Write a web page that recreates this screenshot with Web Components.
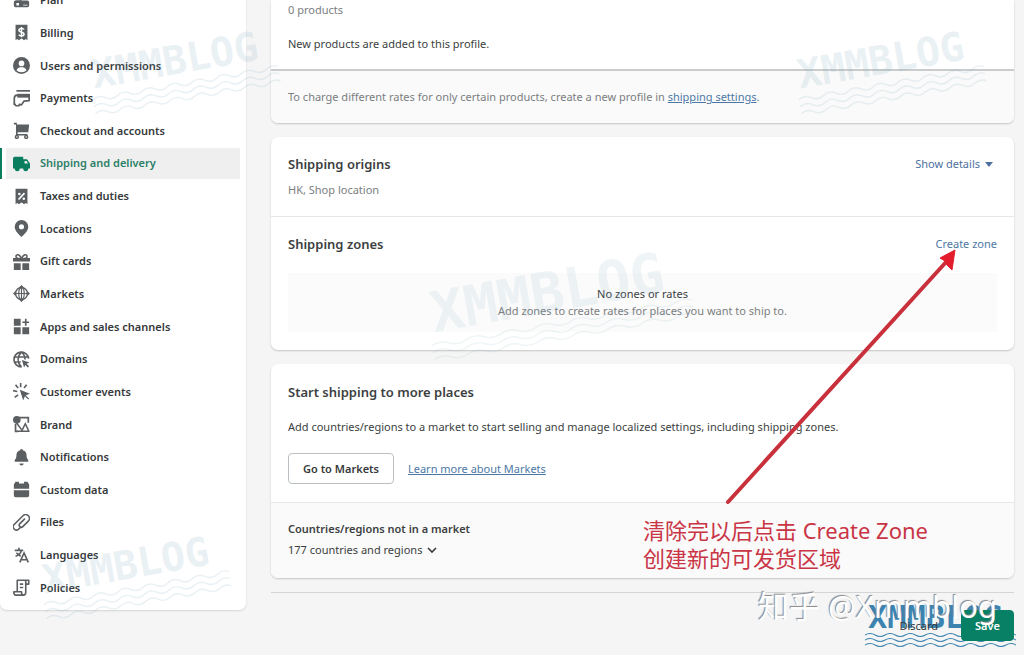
<!DOCTYPE html>
<html lang="en">
<head>
<meta charset="utf-8">
<title>Shipping and delivery</title>
<style>
  body { margin: 0; background: #f5f5f5; color: #3c3f41; font: 11px/16px "Noto Sans", "Open Sans", "Noto Sans CJK SC", sans-serif; }
</style>
</head>
<body>
<settings-page></settings-page>

<script>
const icons = {
  plan: '<path d="M3 10h5v5H3zM9 3h8v5H9z"/><path d="M1 12a2 2 0 0 1 2-2h5V6h2v4h7a2 2 0 0 1 2 2v4a2 2 0 0 1-2 2H3a2 2 0 0 1-2-2z"/><path d="M4 13h3v3H4zM12 15h5v1h-5z" fill="#fff"/>',
  billing: '<path d="M3 1h14v18l-2-1.500-2 1.500-2-1.500-1-.5-1 .5L7 19l-2-1.500L3 19z"/><path d="M13 6.500C12.500 5.500 11.500 5.200 10 5.200c-1.800 0-3 .8-3 2.200 0 3 6 1.500 6 4.300 0 1.500-1.300 2.300-3 2.300-1.600 0-2.700-.6-3.200-1.600M10 3.500v12" fill="none" stroke="#fff" stroke-width="1.800"/>',
  user: '<circle cx="10" cy="10" r="10"/><circle cx="10" cy="7.500" r="3.300" fill="#fff"/><path d="M4 15.500C5.500 12.800 7.500 12.200 10 12.200s4.500.6 6 3.300A8 8 0 0 1 10 18a8 8 0 0 1-6-2.500z" fill="#fff"/>',
  payments: '<path d="M4 0h16v2H4z"/><path d="M1.500 18V10Q1.500 6 5 6H19v6.500L13 13l-3 4.500-2.500-.5L7 18.500H3.500L1 15" fill="none" stroke="currentColor" stroke-width="2" stroke-linejoin="round"/><path d="M5 4.500h15V9H5z"/>',
  cart: '<path d="M1 1h3.500v2H19l-1 9H5.500v2H17v2H3.500V3H1z"/><circle cx="4.500" cy="17.500" r="1.700" fill="none" stroke="currentColor" stroke-width="1.700"/><circle cx="15.500" cy="17.500" r="1.700" fill="none" stroke="currentColor" stroke-width="1.700"/>',
  truck: '<path d="M1.500 2H12v3h4.500l3.500 5v6h-2a3 3 0 0 1-6 0H8a3 3 0 0 1-6 0H0V3.500z"/><path d="M13.500 7H16l1.800 3h-4.300z" fill="#edeeee"/><circle cx="5" cy="16" r="1.500"/><circle cx="15" cy="16" r="1.500"/>',
  tax: '<path d="M3 1h14v18l-2-1.500-2 1.500-2-1.500-1-.5-1 .5L7 19l-2-1.500L3 19z"/><path d="M6.500 13.500 13.500 6" stroke="#fff" stroke-width="2"/><circle cx="7.500" cy="7" r="1.500" fill="#fff"/><circle cx="12.700" cy="12.700" r="1.500" fill="#fff"/>',
  pin: '<path fill-rule="evenodd" d="M10 0a8 8 0 0 0-8 8c0 5 5 9 8 12 3-3 8-7 8-12a8 8 0 0 0-8-8zm0 5a3 3 0 1 1 0 6 3 3 0 0 1 0-6z"/>',
  gift: '<path d="M1 12h8v8H1zM11 12h8v8h-8zM0 6h20v4H0z"/><path d="M10 7C8 1 3.500 1 3.500 4S8 6.500 10 7zM10 7c2-6 6.500-6 6.500-3S12 6.500 10 7z" fill="none" stroke="currentColor" stroke-width="1.800"/>',
  market: '<circle cx="10" cy="10" r="7" fill="none" stroke="currentColor" stroke-width="1.700"/><ellipse cx="10" cy="10" rx="3.200" ry="7" fill="none" stroke="currentColor" stroke-width="1.400"/><path d="M3 10h14M10 3v14" stroke="currentColor" stroke-width="1.400"/><path d="m10 0 3 3H7zM10 20l3-3H7zM0 10l3-3v6zM20 10l-3-3v6z"/>',
  apps: '<path d="M1 1h8v8H1zM1 11h8v8H1zM11 11h8v8h-8zM14 1h2v3h3v2h-3v3h-2V6h-3V4h3z"/>',
  domain: '<path d="M18.500 9A8.700 8.700 0 1 0 10 18.700M10 19C4.500 13 4.500 7 10 1M10 1c3 3 4.500 6 4 9M2 7h16M2 13h7" fill="none" stroke="currentColor" stroke-width="1.900"/><path d="m10.500 10.500 9 3-3.500 1.500 3 3-1.500 1.500-3-3-1.500 3z"/>',
  cursor: '<path d="m8 8 12 4.500-5 2 4 4-1 1-4-4-2 5z"/><path d="M9 0v5M3 2l3 4M16 2l-3 4M0 9l5 1M2 17l4-3" stroke="currentColor" stroke-width="1.900"/>',
  brand: '<circle cx="4.500" cy="4.500" r="4.500"/><path d="M7 2h11v6M3 9v9h3" fill="none" stroke="currentColor" stroke-width="2"/><path d="M5 18h14M10 18l4.500-9L19 18.500M4 8l6 8" fill="none" stroke="currentColor" stroke-width="1.800"/>',
  bell: '<path d="M10 0a1.500 1.500 0 0 1 1.500 1.600C15 2.500 16 5 16 8c0 3 1 4 2 5v2H2v-2c1-1 2-2 2-5 0-3 1-5.500 4.500-6.400A1.500 1.500 0 0 1 10 0zM7.500 17h5a2.500 2.500 0 0 1-5 0z"/>',
  data: '<path d="M3 1h4v2h6V1h4l2 3v5H1V4zM1 11h18v6a2 2 0 0 1-2 2H3a2 2 0 0 1-2-2z"/>',
  clip: '<path d="M9 15.500 6.800 17.700a3.800 3.800 0 0 1-5.400-5.400L11.700 2a4.400 4.400 0 0 1 6.300 6.300l-6.500 6.500a2.400 2.400 0 0 1-3.400-3.400L13.500 6" fill="none" stroke="currentColor" stroke-width="1.900" stroke-linecap="round"/>',
  language: '<path d="M2 4h10M7 1v3M10 4c-1 4-4 6-7 7M4 7l5 4M8 18l5-11 5 11M10 15h6.500" fill="none" stroke="currentColor" stroke-width="1.900"/>',
  policy: '<path d="M5 14V1.500h13.500V6H15v10c0 2-1 3-3 3H3c-2 0-2-3-2-4h9c0 2 0 4 2 4M15 6V2M8 6h4M8 10h4" fill="none" stroke="currentColor" stroke-width="1.900" stroke-linejoin="round"/>'
};

function define(name, html) {
  const template = document.createElement('template');
  template.innerHTML = html;
  customElements.define(name, class extends HTMLElement {
    constructor() {
      super();
      this.attachShadow({ mode: 'open' }).append(template.content.cloneNode(true));
    }
  });
}

customElements.define('nav-item', class extends HTMLElement {
  connectedCallback() {
    const root = this.attachShadow({ mode: 'open' });
    root.innerHTML = `<style>
      :host { display: grid; color: #36393b; }
      a { display: flex; align-items: center; gap: 10px; margin: 0 6px; padding-left: 7px; color: inherit; text-decoration: none; font-weight: 600; }
      svg { width: 17px; height: 17px; fill: #5c5f62; color: #5c5f62; flex: none; }
      :host([active]) { border-left: 2px solid #0a7d5f; }
      :host([active]) a { margin-left: 4px; background: #efefef; color: #2b7f68; }
      :host([active]) svg { fill: #0a7d5f; color: #0a7d5f; }
    </style><a href="#"><svg viewBox="0 0 20 20" aria-hidden="true">${icons[this.getAttribute('icon')]}</svg><slot></slot></a>`;
    if (this.hasAttribute('active')) root.querySelector('a').setAttribute('aria-current', 'page');
  }
});

define('settings-nav', `<style>
    :host { display: block; }
    nav { display: grid; grid-auto-rows: 1fr; gap: 2px; min-height: 618px; margin-top: -15px; padding-bottom: 7px; background: #fff; border-radius: 0 0 7px 7px; box-shadow: 0 1px 2px #0002; }
  </style>
  <nav aria-label="Settings">
    <nav-item icon="plan">Plan</nav-item>
    <nav-item icon="billing">Billing</nav-item>
    <nav-item icon="user">Users and permissions</nav-item>
    <nav-item icon="payments">Payments</nav-item>
    <nav-item icon="cart">Checkout and accounts</nav-item>
    <nav-item icon="truck" active>Shipping and delivery</nav-item>
    <nav-item icon="tax">Taxes and duties</nav-item>
    <nav-item icon="pin">Locations</nav-item>
    <nav-item icon="gift">Gift cards</nav-item>
    <nav-item icon="market">Markets</nav-item>
    <nav-item icon="apps">Apps and sales channels</nav-item>
    <nav-item icon="domain">Domains</nav-item>
    <nav-item icon="cursor">Customer events</nav-item>
    <nav-item icon="brand">Brand</nav-item>
    <nav-item icon="bell">Notifications</nav-item>
    <nav-item icon="data">Custom data</nav-item>
    <nav-item icon="clip">Files</nav-item>
    <nav-item icon="language">Languages</nav-item>
    <nav-item icon="policy">Policies</nav-item>
  </nav>`);

define('ui-card', `<style>
    :host { display: block; background: #fff; border-radius: 7px; box-shadow: 0 1px 2px #0003; overflow: hidden; }
  </style><slot></slot>`);

define('card-section', `<style>
    :host { display: block; padding: 18px 17px; }
    :host([divided]) { border-top: 1px solid #e6e7e8; }
    :host([subdued]) { background: #fafafa; }
  </style><slot></slot>`);

define('ui-link', `<style>
    :host { display: inline; }
    a { color: #4d78a5; text-decoration: none; }
    :host([underline]) a { text-decoration: underline; }
  </style><a href="#"><slot></slot></a>`);

define('ui-button', `<style>
    :host { display: inline-flex; }
    button { font: inherit; font-weight: 600; color: #36393b; min-height: 31px; padding: 0 14px; border: 1px solid #babfc3; border-radius: 4px; background: #fff; }
    :host([primary]) button { background: #078065; border-color: #078065; color: #fff; padding: 0 13px; }
    :host([plain]) button { background: none; border-color: transparent; font-weight: 400; }
  </style><button type="button"><slot></slot></button>`);

define('wave-mark', `<style>
    :host { display: block; width: max-content; font: 700 40px/44px "DejaVu Sans Mono", monospace; color: #7aa5b8; opacity: .15; transform: rotate(-10deg); }
    :host([large]) { font-size: 56px; line-height: 58px; opacity: .11; }
    :host([solid]) { font-size: 32px; line-height: 32px; color: #2878a8; opacity: .9; transform: none; }
    svg { display: block; width: 0; min-width: 112%; height: 20px; margin-left: -2%; }
    :host([solid]) svg { height: 14px; }
  </style>
  <slot></slot>
  <svg viewBox="0 0 150 14" preserveAspectRatio="none" fill="none" stroke="currentColor" aria-hidden="true">
    <path id="w" d="M0 2q5-3 10 0t10 0 10 0 10 0 10 0 10 0 10 0 10 0 10 0 10 0 10 0 10 0 10 0 10 0 10 0"/>
    <use href="#w" y="5"/><use href="#w" y="10"/>
  </svg>`);

define('watermark-layer', `<style>
    :host { position: absolute; inset: 0; pointer-events: none; overflow: hidden; z-index: 1; }
    wave-mark { position: absolute; }
    .a { left: 92px; top: 38px; } .b { left: 798px; top: 38px; }
    .c { left: 431px; top: 264px; } .d { left: 43px; top: 543px; }
    .e { left: 868px; top: 601px; }
  </style>
  <wave-mark class="a">XMMBLOG</wave-mark>
  <wave-mark class="b">XMMBLOG</wave-mark>
  <wave-mark class="c" large>XMMBLOG</wave-mark>
  <wave-mark class="d">XMMBLOG</wave-mark>
  <wave-mark class="e" solid>XMMBLOG</wave-mark>`);

define('annotation-layer', `<style>
    :host { position: absolute; inset: 0; pointer-events: none; overflow: hidden; z-index: 3; }
    svg, p { position: absolute; margin: 0; }
    svg { left: 720px; top: 245px; }
    .note { left: 643px; top: 516px; color: #c93545; font: 22px/28px "Noto Sans", "Noto Sans CJK SC", sans-serif; }
    .credit { left: 758px; top: 588px; color: #fff; font: 31px/36px "Noto Sans", "Noto Sans CJK SC", sans-serif; text-shadow: -1px -1px 1px #888; }
  </style>
  <svg width="245" height="265" viewBox="0 0 245 265" aria-hidden="true">
    <path d="M8 257 227 16" stroke="#c8303b" stroke-width="4" stroke-linecap="round"/>
    <path d="m235 5-15 8 5 3 2 4 5 5z" fill="#e31d2b" stroke="#e31d2b"/>
  </svg>
  <p class="note" lang="zh-CN">清除完以后点击 Create Zone<br>创建新的可发货区域</p>
  <p class="credit" lang="zh-CN">知乎 @Xmmblog</p>`);

define('settings-page', `<style>
    :host { display: block; position: relative; min-height: 100vh; overflow: hidden; }
    .layout { display: grid; grid-template-columns: 246px minmax(0, 1fr); gap: 25px; padding-right: 10px; align-items: start; }
    main { display: grid; gap: 14px; }
    p, h2, h3 { margin: 0; }
    h2 { font: 600 13px/18px "Noto Sans", "Open Sans", sans-serif; }
    h3 { font-size: 11px; line-height: 16px; font-weight: 600; }
    .muted { color: #7b7e81; }
    .first { border-radius: 0 0 7px 7px; }
    .profile { display: grid; gap: 18px; padding-top: 2px; padding-bottom: 17px; }
    .charge { border-top: 2px solid #c9cbcc; }
    .row { display: flex; justify-content: space-between; align-items: center; }
    .origins { display: grid; gap: 9px; }
    .zones { display: grid; gap: 20px; }
    .empty { background: #fbfbfb; text-align: center; line-height: 17px; padding: 12px 0 13px; }
    .places { display: grid; gap: 18px; padding-top: 19px; }
    .actions { display: flex; align-items: center; gap: 14px; }
    .countries { display: grid; gap: 5px; padding-bottom: 20px; }
    .toggle { font: inherit; color: inherit; background: none; border: 0; padding: 0; display: flex; align-items: center; gap: 5px; justify-self: start; }
    .details { color: #4d70a0; }
    .details svg { margin-right: 4px; }
    footer { position: relative; z-index: 2; border-top: 1px solid #d4d5d7; display: flex; justify-content: flex-end; gap: 8px; padding-top: 17px; }
  </style>
  <div class="layout">
    <settings-nav></settings-nav>
    <main>
      <ui-card class="first">
        <card-section class="profile"><p class="muted">0 products</p><p>New products are added to this profile.</p></card-section>
        <card-section subdued class="charge"><p class="muted">To charge different rates for only certain products, create a new profile in <ui-link underline>shipping settings</ui-link>.</p></card-section>
      </ui-card>
      <ui-card>
        <card-section class="origins">
          <div class="row"><h2>Shipping origins</h2><button class="toggle details" type="button">Show details <svg width="8" height="5" viewBox="0 0 8 5" fill="currentColor" aria-hidden="true"><path d="M0 0h8L4 5z"/></svg></button></div>
          <p class="muted">HK, Shop location</p>
        </card-section>
        <card-section divided class="zones">
          <div class="row"><h2>Shipping zones</h2><ui-link>Create zone</ui-link></div>
          <div class="empty"><p>No zones or rates</p><p class="muted">Add zones to create rates for places you want to ship to.</p></div>
        </card-section>
      </ui-card>
      <ui-card>
        <card-section class="places">
          <h2>Start shipping to more places</h2>
          <p>Add countries/regions to a market to start selling and manage localized settings, including shipping zones.</p>
          <div class="actions"><ui-button>Go to Markets</ui-button><ui-link underline>Learn more about Markets</ui-link></div>
        </card-section>
        <card-section divided subdued class="countries">
          <h3>Countries/regions not in a market</h3>
          <button class="toggle" type="button">177 countries and regions <svg width="10" height="7" viewBox="0 0 10 7" fill="none" stroke="currentColor" stroke-width="1.700" aria-hidden="true"><path d="m1 1 4 4 4-4"/></svg></button>
        </card-section>
      </ui-card>
      <footer><ui-button plain>Discard</ui-button><ui-button primary>Save</ui-button></footer>
    </main>
  </div>
  <watermark-layer></watermark-layer>
  <annotation-layer></annotation-layer>`);
</script>
</body>
</html>
